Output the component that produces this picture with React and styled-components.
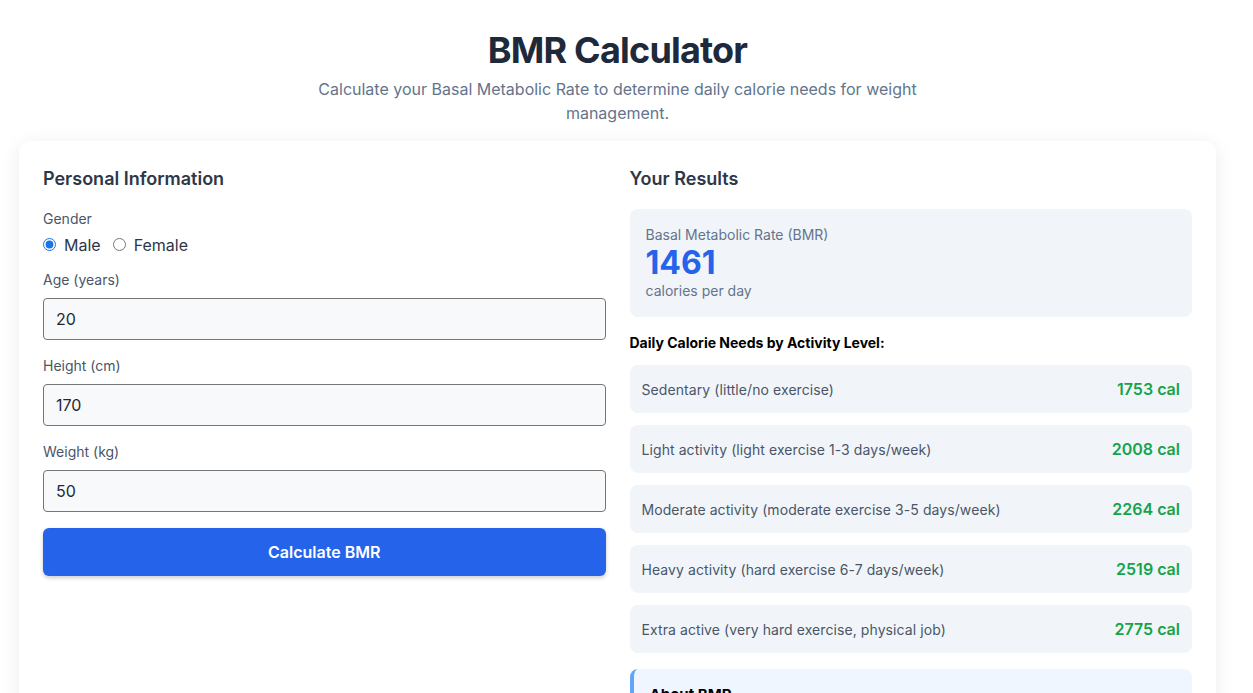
import React, { useState } from "react";
import styled, { createGlobalStyle } from "styled-components";

const GlobalStyle = createGlobalStyle`
	* { box-sizing: border-box; }
	body {
		margin: 0;
		background: #ffffff;
		font-family: Inter, "Noto Sans", sans-serif;
		color: #1f2937;
		overflow: hidden;
	}
`;

const Page = styled.div`
	max-width: 1236px;
	padding: 30px 20px 40px 19px;
`;

const Header = styled.header`
	text-align: center;
	margin-bottom: 16px;
`;

const Title = styled.h1`
	margin: 0;
	font-size: 36px;
	line-height: 40px;
	font-weight: 700;
	color: #1e293b;
	letter-spacing: -0.8px;
`;

const Subtitle = styled.p`
	max-width: 610px;
	margin: 7px auto 0;
	font-size: 16px;
	line-height: 24px;
	color: #64748b;
`;

const Card = styled.main`
	display: grid;
	grid-template-columns: 1fr 1fr;
	gap: 24px;
	padding: 24px;
	background: #ffffff;
	border-radius: 12px;
	box-shadow: 0 4px 20px rgba(15, 23, 42, 0.08);
`;

const Column = styled.section`
	display: flex;
	flex-direction: column;
`;

const SectionTitle = styled.h2`
	margin: 0 0 16px;
	font-size: 18px;
	line-height: 28px;
	font-weight: 600;
	color: #2d3748;
`;

const Field = styled.div`
	margin-bottom: ${(p) => p.$gap || 16}px;
`;

const Label = styled.label`
	display: block;
	margin-bottom: ${(p) => (p.$tight ? "4px" : "8px")};
	font-size: 14px;
	line-height: 20px;
	color: #4a5568;
`;

const RadioRow = styled.div`
	display: flex;
	align-items: center;
	gap: 12px;
	height: 23px;
`;

const RadioOption = styled.label`
	display: flex;
	align-items: center;
	gap: 8px;
	font-size: 16px;
	color: #2d3748;

	input {
		margin: 0;
		width: 13px;
		height: 13px;
		accent-color: #1a73e8;
	}
`;

const Input = styled.input`
	display: block;
	width: 100%;
	height: 42px;
	padding: 0 12px;
	font-family: inherit;
	font-size: 16px;
	color: #1f2937;
	background: #f8f9fa;
	border: 1px solid #767676;
	border-radius: 4px;
	outline: none;
`;

const Button = styled.button`
	width: 100%;
	height: 48px;
	border: none;
	border-radius: 6px;
	background: #2563eb;
	color: #ffffff;
	font-family: inherit;
	font-size: 16px;
	font-weight: 600;
	box-shadow: 0 2px 4px rgba(0, 0, 0, 0.2);
	cursor: pointer;
`;

const BmrBox = styled.div`
	padding: 16px;
	background: #f1f5f9;
	border-radius: 8px;
	margin-bottom: 16px;
`;

const BmrLabel = styled.div`
	font-size: 14px;
	line-height: 20px;
	color: #64748b;
`;

const BmrValue = styled.div`
	font-size: 32px;
	line-height: 36px;
	font-weight: 700;
	color: #2563eb;
`;

const ListTitle = styled.h3`
	margin: 0 0 12px;
	font-size: 14px;
	line-height: 20px;
	font-weight: 700;
	color: #000000;
`;

const ActivityList = styled.div`
	display: flex;
	flex-direction: column;
	gap: 12px;
	margin-bottom: 16px;
`;

const ActivityRow = styled.div`
	display: flex;
	align-items: center;
	justify-content: space-between;
	height: 48px;
	padding: 0 12px;
	background: #f1f5f9;
	border-radius: 8px;
`;

const ActivityName = styled.span`
	font-size: 14px;
	letter-spacing: 0.08px;
	color: #4a5568;
`;

const ActivityCal = styled.span`
	font-size: 16px;
	font-weight: 600;
	color: #16a34a;
`;

const InfoBox = styled.div`
	padding: 16px;
	background: #eff6ff;
	border-left: 4px solid #60a5fa;
	border-radius: 8px;
`;

const InfoTitle = styled.h4`
	margin: 0 0 8px;
	font-size: 15px;
	line-height: 20px;
	font-weight: 700;
	color: #000000;
`;

const InfoText = styled.p`
	margin: 0;
	font-size: 14px;
	line-height: 20px;
	color: #4a5568;
`;

const levels = [
	{ name: "Sedentary (little/no exercise)", factor: 1.2 },
	{ name: "Light activity (light exercise 1-3 days/week)", factor: 1.375 },
	{ name: "Moderate activity (moderate exercise 3-5 days/week)", factor: 1.55 },
	{ name: "Heavy activity (hard exercise 6-7 days/week)", factor: 1.725 },
	{ name: "Extra active (very hard exercise, physical job)", factor: 1.9 },
];

// revised Harris-Benedict
function calcBmr(gender, age, height, weight) {
	if (gender === "male") {
		return 88.362 + 13.397 * weight + 4.799 * height - 5.677 * age;
	}
	return 447.593 + 9.247 * weight + 3.098 * height - 4.33 * age;
}

export default function App() {
	const [gender, setGender] = useState("male");
	const [age, setAge] = useState("20");
	const [height, setHeight] = useState("170");
	const [weight, setWeight] = useState("50");
	const [bmr, setBmr] = useState(() => calcBmr("male", 20, 170, 50));

	const handleCalc = () => {
		setBmr(calcBmr(gender, Number(age), Number(height), Number(weight)));
	};

	return (
		<Page>
			<GlobalStyle />
			<Header>
				<Title>BMR Calculator</Title>
				<Subtitle>
					Calculate your Basal Metabolic Rate to determine daily calorie needs for weight
					management.
				</Subtitle>
			</Header>

			<Card>
				<Column>
					<SectionTitle>Personal Information</SectionTitle>
					<Field $gap={14}>
						<Label $tight>Gender</Label>
						<RadioRow>
							<RadioOption>
								<input
									type="radio"
									name="gender"
									checked={gender === "male"}
									onChange={() => setGender("male")}
								/>
								Male
							</RadioOption>
							<RadioOption>
								<input
									type="radio"
									name="gender"
									checked={gender === "female"}
									onChange={() => setGender("female")}
								/>
								Female
							</RadioOption>
						</RadioRow>
					</Field>
					<Field>
						<Label>Age (years)</Label>
						<Input type="text" value={age} onChange={(e) => setAge(e.target.value)} />
					</Field>
					<Field>
						<Label>Height (cm)</Label>
						<Input type="text" value={height} onChange={(e) => setHeight(e.target.value)} />
					</Field>
					<Field>
						<Label>Weight (kg)</Label>
						<Input type="text" value={weight} onChange={(e) => setWeight(e.target.value)} />
					</Field>
					<Button onClick={handleCalc}>Calculate BMR</Button>
				</Column>

				<Column>
					<SectionTitle>Your Results</SectionTitle>
					<BmrBox>
						<BmrLabel>Basal Metabolic Rate (BMR)</BmrLabel>
						<BmrValue>{Math.round(bmr)}</BmrValue>
						<BmrLabel>calories per day</BmrLabel>
					</BmrBox>

					<ListTitle>Daily Calorie Needs by Activity Level:</ListTitle>
					<ActivityList>
						{levels.map((l) => (
							<ActivityRow key={l.name}>
								<ActivityName>{l.name}</ActivityName>
								<ActivityCal>{Math.round(bmr * l.factor)} cal</ActivityCal>
							</ActivityRow>
						))}
					</ActivityList>

					<InfoBox>
						<InfoTitle>About BMR</InfoTitle>
						<InfoText>
							Your BMR is the number of calories your body needs at rest to keep basic
							functions running, such as breathing, circulation and cell production.
						</InfoText>
					</InfoBox>
				</Column>
			</Card>
		</Page>
	);
}
